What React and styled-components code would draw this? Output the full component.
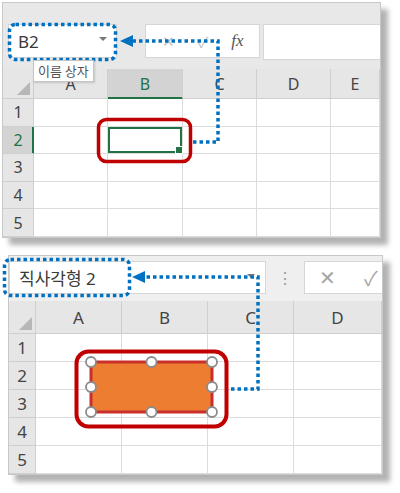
import React from 'react';
import styled, { createGlobalStyle } from 'styled-components';

const GREEN = '#217346';
const BLUE = '#0070c0';
const RED = '#c00000';

const GlobalStyle = createGlobalStyle`
    html, body {
        margin: 0;
        padding: 0;
        background: #fff;
    }
    body {
        font-family: "Noto Sans", "Noto Sans CJK KR", sans-serif;
    }
`;

const Stage = styled.div`
    position: relative;
    width: 400px;
    height: 493px;
    overflow: hidden;
    box-sizing: border-box;
    padding-top: 2px;
    display: flex;
    flex-direction: column;
    gap: 17px;
`;

const Window = styled.div`
    margin-left: ${(p) => p.$left}px;
    width: ${(p) => p.$width}px;
    height: ${(p) => p.$height}px;
    box-sizing: border-box;
    background: #fff;
    border: 1px solid #c8c8c8;
    box-shadow: 7px 7px 5px rgba(0, 0, 0, 0.3);
    overflow: hidden;
    display: flex;
    flex-direction: column;
`;

const Toolbar = styled.div`
    height: ${(p) => p.$height}px;
    flex: none;
    background: ${(p) => p.$bg};
    display: flex;
    align-items: flex-start;
    padding-top: ${(p) => p.$top}px;
    padding-left: ${(p) => p.$left}px;
    box-sizing: border-box;
`;

const NameBox = styled.div`
    position: relative;
    flex: none;
    width: ${(p) => p.$width}px;
    height: ${(p) => p.$height}px;
    box-sizing: border-box;
    background: #fff;
    border: 1px solid #d6d6d6;
    display: flex;
    align-items: center;
    padding-left: ${(p) => p.$pad}px;
    font-size: 17px;
    color: #3a3a3a;
    font-family: "Noto Sans", "Noto Sans CJK KR", sans-serif;
`;

const DropArrow = styled.span`
    margin-left: auto;
    margin-right: ${(p) => p.$right}px;
    margin-top: -4px;
    width: 0;
    height: 0;
    border-left: 4px solid transparent;
    border-right: 4px solid transparent;
    border-top: 4px solid #777;
`;

const ControlBox = styled.div`
    flex: none;
    margin-left: ${(p) => p.$offset}px;
    width: ${(p) => p.$width}px;
    height: ${(p) => p.$height}px;
    box-sizing: border-box;
    background: #fff;
    border: 1px solid #d6d6d6;
    display: flex;
    align-items: center;
    gap: ${(p) => p.$gap}px;
    padding-left: ${(p) => p.$pad}px;
    color: ${(p) => p.$color};
    font-size: ${(p) => p.$size}px;
`;

const FxLabel = styled.span`
    font-family: "Liberation Serif", serif;
    font-style: italic;
    font-size: 17px;
    color: #555;
`;

const FormulaInput = styled.div`
    flex: 1;
    margin-left: 3px;
    height: 34px;
    background: #fff;
    border: 1px solid #d6d6d6;
    border-right: none;
`;

const Grip = styled.div`
    flex: none;
    width: 38px;
    height: 33px;
    display: flex;
    align-items: center;
    justify-content: center;
    color: #9a9a9a;
    font-size: 16px;
`;

const Sheet = styled.div`
    flex: 1;
    display: grid;
    grid-template-columns: ${(p) => p.$cols};
    grid-template-rows: ${(p) => p.$rows};
    font-size: ${(p) => p.$font}px;
`;

const HeadCell = styled.div`
    position: relative;
    background: ${(p) => (p.$active ? '#d3d3d3' : '#e6e6e6')};
    color: ${(p) => (p.$active ? GREEN : '#444')};
    border-right: 1px solid ${(p) => (p.$active && p.$row ? GREEN : '#cfcfcf')};
    border-bottom: 1px solid ${(p) => (p.$active && !p.$row ? GREEN : '#cfcfcf')};
    box-shadow: ${(p) =>
        p.$active ? (p.$row ? `inset -1px 0 0 ${GREEN}` : `inset 0 -1px 0 ${GREEN}`) : 'none'};
    display: flex;
    align-items: center;
    justify-content: center;
    box-sizing: border-box;
`;

const Corner = styled(HeadCell)`
    &::after {
        content: '';
        position: absolute;
        right: 3px;
        bottom: 3px;
        width: 0;
        height: 0;
        border-left: 13px solid transparent;
        border-bottom: 13px solid #b7b7b7;
    }
`;

const Cell = styled.div`
    position: relative;
    border-right: 1px solid #dcdcdc;
    border-bottom: 1px solid #dcdcdc;
    box-sizing: border-box;
    box-shadow: ${(p) => (p.$selected ? `inset 0 0 0 2px ${GREEN}` : 'none')};

    &::after {
        content: '';
        display: ${(p) => (p.$selected ? 'block' : 'none')};
        position: absolute;
        right: -1px;
        bottom: -1px;
        width: 6px;
        height: 6px;
        background: ${GREEN};
        border: 1px solid #fff;
    }
`;

const Overlay = styled.svg`
    position: absolute;
    left: 0;
    top: 0;
    pointer-events: none;
`;

const Tooltip = styled.div`
    position: absolute;
    left: 33px;
    top: 60px;
    padding: 1px 4px;
    background: #fff;
    border: 1px solid #c4c4c4;
    box-shadow: 1px 1px 2px rgba(0, 0, 0, 0.15);
    font-family: "Noto Sans CJK KR", sans-serif;
    font-size: 13px;
    color: #555;
    line-height: 18px;
`;

const Grid = ({ cols, letters, rows, font, activeCol, activeRow, selected }) => (
    <Sheet $cols={cols} $rows={rows} $font={font}>
        <Corner />
        {letters.map((l) => (
            <HeadCell key={l} $active={l === activeCol}>
                {l}
            </HeadCell>
        ))}
        {[1, 2, 3, 4, 5].map((r) => (
            <React.Fragment key={r}>
                <HeadCell $row $active={r === activeRow}>
                    {r}
                </HeadCell>
                {letters.map((l) => (
                    <Cell key={l} $selected={selected === `${l}${r}`} />
                ))}
            </React.Fragment>
        ))}
    </Sheet>
);

const Handle = ({ x, y }) => <circle cx={x} cy={y} r="5" fill="#fff" stroke="#8c8c8c" strokeWidth="1.8" />;

const Annotations = () => {
    const dots = { fill: 'none', stroke: BLUE, strokeWidth: 3.5, strokeDasharray: '3.5 3' };
    const handles = [
        [91, 362], [151.5, 362], [212, 362],
        [91, 387], [212, 387],
        [91, 412], [151.5, 412], [212, 412],
    ];
    return (
        <Overlay width="400" height="493" viewBox="0 0 400 493">
            {/* upper screenshot */}
            <rect x="9.5" y="24.5" width="106" height="35" rx="6" {...dots} />
            <path d="M193 142 H218 V41 H133" {...dots} />
            <polygon points="120,41 133,35 133,47" fill={BLUE} />
            <rect x="98.5" y="119.5" width="92" height="42" rx="8" fill="none" stroke={RED} strokeWidth="3.5" />

            {/* lower screenshot */}
            <rect x="91" y="362" width="121" height="50" fill="#ed7d31" stroke="#c9302c" strokeWidth="3" />
            {handles.map(([x, y]) => (
                <Handle key={`${x}-${y}`} x={x} y={y} />
            ))}
            <rect x="76.5" y="351.5" width="150" height="75" rx="12" fill="none" stroke={RED} strokeWidth="4" />
            <rect x="4.5" y="259.5" width="125" height="36" rx="6" {...dots} />
            <path d="M231 389 H258 V277 H145" {...dots} />
            <polygon points="132,277 145,271 145,283" fill={BLUE} />
        </Overlay>
    );
};

const App = () => (
    <>
        <GlobalStyle />
        <Stage>
            <Window $left={2} $width={379} $height={236}>
                <Toolbar $height={66} $bg="#e8e8e8" $top={21} $left={5}>
                    <NameBox $width={109} $height={34} $pad={9}>
                        B2
                        <DropArrow $right={9} />
                    </NameBox>
                    <ControlBox $offset={28} $width={115} $height={34} $color="#c4c4c4" $size={15} $pad={16} $gap={23}>
                        <span>✕</span>
                        <span>✓</span>
                        <FxLabel>fx</FxLabel>
                    </ControlBox>
                    <FormulaInput />
                </Toolbar>
                <Grid
                    cols="31px 74px 75px 74px 74px 1fr"
                    rows="30px repeat(5, 1fr)"
                    letters={['A', 'B', 'C', 'D', 'E']}
                    font={16}
                    activeCol="B"
                    activeRow={2}
                    selected="B2"
                />
            </Window>
            <Window $left={8} $width={375} $height={220}>
                <Toolbar $height={45} $bg="#efefef" $top={5} $left={0}>
                    <NameBox $width={257} $height={33} $pad={9}>
                        직사각형 2
                        <DropArrow $right={10} />
                    </NameBox>
                    <Grip>⋮</Grip>
                    <ControlBox $offset={0} $width={100} $height={33} $color="#a6a6a6" $size={20} $pad={14} $gap={28}>
                        <span>✕</span>
                        <span>✓</span>
                    </ControlBox>
                </Toolbar>
                <Grid
                    cols="27px 86px 86px 86px 1fr"
                    rows="33px repeat(5, 1fr)"
                    letters={['A', 'B', 'C', 'D']}
                    font={17}
                />
            </Window>
            <Annotations />
            <Tooltip>이름 상자</Tooltip>
        </Stage>
    </>
);

export default App;
